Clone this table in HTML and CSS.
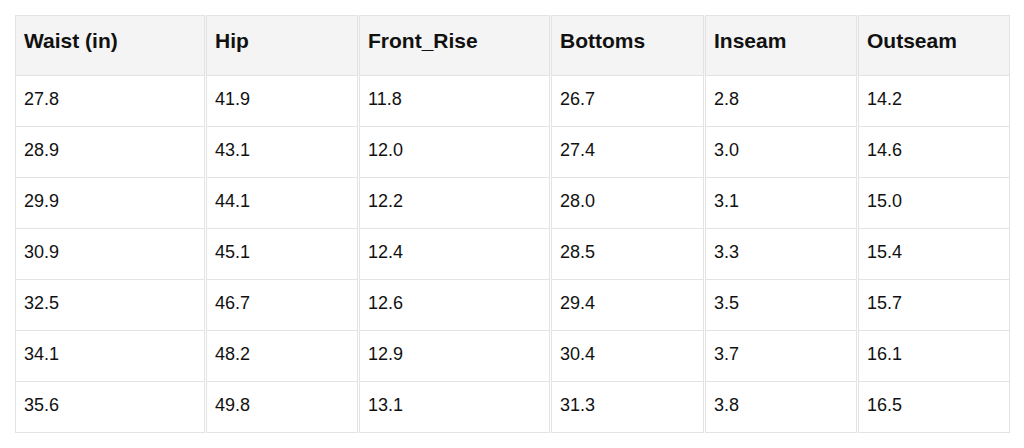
FILE: index.html
```html
<!DOCTYPE html>
<html>
<head>
<meta charset="utf-8">
<link rel="stylesheet" href="styles.css">
</head>
<body>
<table class="size-table">
  <colgroup>
    <col class="c1"><col class="c2"><col class="c3"><col class="c4"><col class="c5"><col class="c6">
  </colgroup>
  <thead>
    <tr><th>Waist (in)</th><th>Hip</th><th>Front_Rise</th><th>Bottoms</th><th>Inseam</th><th>Outseam</th></tr>
  </thead>
  <tbody>
    <tr><td>27.8</td><td>41.9</td><td>11.8</td><td>26.7</td><td>2.8</td><td>14.2</td></tr>
    <tr><td>28.9</td><td>43.1</td><td>12.0</td><td>27.4</td><td>3.0</td><td>14.6</td></tr>
    <tr><td>29.9</td><td>44.1</td><td>12.2</td><td>28.0</td><td>3.1</td><td>15.0</td></tr>
    <tr><td>30.9</td><td>45.1</td><td>12.4</td><td>28.5</td><td>3.3</td><td>15.4</td></tr>
    <tr><td>32.5</td><td>46.7</td><td>12.6</td><td>29.4</td><td>3.5</td><td>15.7</td></tr>
    <tr><td>34.1</td><td>48.2</td><td>12.9</td><td>30.4</td><td>3.7</td><td>16.1</td></tr>
    <tr><td>35.6</td><td>49.8</td><td>13.1</td><td>31.3</td><td>3.8</td><td>16.5</td></tr>
  </tbody>
</table>
</body>
</html>
```

FILE: styles.css
```css
html, body {
  margin: 0;
  padding: 0;
  background: #ffffff;
}
body {
  padding: 15px;
  font-family: "Liberation Sans", Arial, sans-serif;
  color: #111111;
}
.size-table {
  border-collapse: collapse;
  table-layout: fixed;
  width: 994px;
}
.c1 { width: 190px; }
.c2 { width: 153px; }
.c3 { width: 192px; }
.c4 { width: 154px; }
.c5 { width: 153px; }
.c6 { width: 152px; }
.size-table th,
.size-table td {
  border: 1px solid #e3e3e3;
  border-left: 3px double #e3e3e3;
  border-right: 3px double #e3e3e3;
  text-align: left;
  vertical-align: middle;
  padding: 0 0 3px 8px;
}
.size-table th:first-child,
.size-table td:first-child {
  border-left: 1px solid #e3e3e3;
}
.size-table th:last-child,
.size-table td:last-child {
  border-right: 1px solid #e3e3e3;
}
.size-table th {
  background: #f4f4f4;
  font-weight: bold;
  font-size: 21px;
  height: 50px;
  padding-bottom: 9px;
}
.size-table td {
  font-size: 18px;
  height: 47px;
}
```
